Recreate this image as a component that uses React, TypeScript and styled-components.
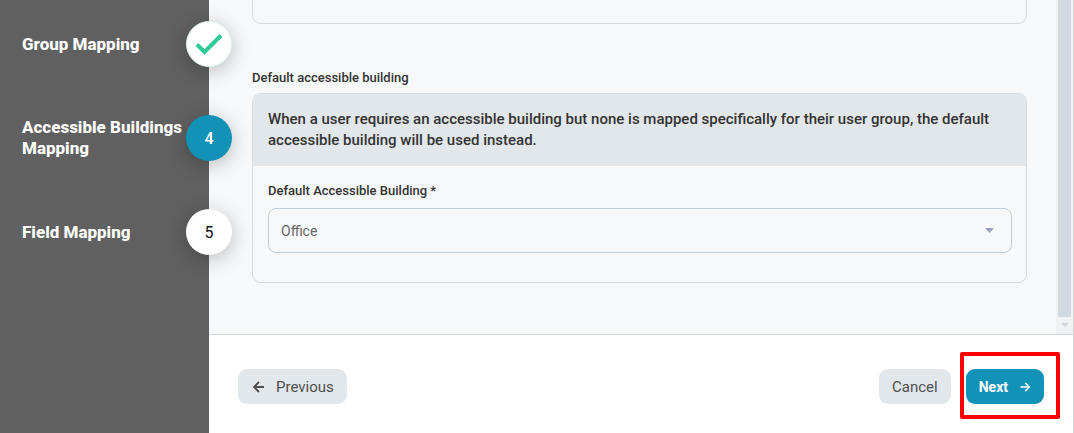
import React from "react";
import styled, { createGlobalStyle, css } from "styled-components";

const GlobalStyle = createGlobalStyle`
  * { box-sizing: border-box; }
  body { margin: 0; background: #fff; color: #333; font-family: Roboto, "Liberation Sans", sans-serif; font-size: 14px; }
  button, select { font: inherit; }
`;

const Page = styled.div`
  display: flex;
  min-height: 100vh;
  border-right: 1px solid #d3d3d3;
`;

const Sidebar = styled.nav`
  position: relative;
  z-index: 1;
  flex: 0 0 209px;
  padding: 21px 0 0 22px;
  background: #606060;
`;

const Steps = styled.ol`
  display: flex;
  flex-direction: column;
  gap: 48px;
  margin: 0 -23px 0 0;
  padding: 0;
  list-style: none;
`;

const Step = styled.li`
  display: flex;
  align-items: center;
  justify-content: space-between;
  height: 46px;
`;

const StepLabel = styled.span`
  flex: 0 0 164px;
  color: #fff;
  font-size: 17px;
  font-weight: 800;
  line-height: 21px;
`;

type StepState = "done" | "current" | "todo";

const StepBadge = styled.span<{ $state: StepState }>`
  display: flex;
  flex: 0 0 46px;
  align-items: center;
  justify-content: center;
  height: 46px;
  border-radius: 50%;
  background: #fff;
  color: #111;
  font-size: 16px;
  box-shadow: 0 4px 20px rgba(0, 0, 0, 0.25);
  ${({ $state }) => $state === "done" && css`border: 1px solid #dcf6eb;`}
  ${({ $state }) => $state === "current" && css`background: #1192b6; color: #fff; font-weight: 500;`}
`;

const Main = styled.main`
  display: flex;
  flex: 1;
  flex-direction: column;
  min-width: 0;
`;

const ScrollArea = styled.div`
  display: flex;
  border-bottom: 1px solid #cfd8df;
  background: #f7f8fa;
`;

const Content = styled.div`
  flex: 1;
  min-width: 0;
  padding: 0 29px 51px 43px;
`;

const PreviousPanel = styled.div`
  height: 24px;
  border: 1px solid #d5dce1;
  border-top: 0;
  border-radius: 0 0 9px 9px;
`;

const Section = styled.section`
  padding-top: 46px;
`;

const SectionTitle = styled.h2`
  margin: 0 0 7px;
  font-size: 13px;
  font-weight: 500;
  line-height: 16px;
`;

const Panel = styled.div`
  overflow: hidden;
  border: 1px solid #d5dce1;
  border-radius: 9px;
`;

const Notice = styled.p`
  margin: 0;
  padding: 15px;
  background: #e2e7eb;
  font-size: 15px;
  font-weight: 500;
  line-height: 21px;
`;

const Field = styled.div`
  padding: 17px 14px 29px 15px;
`;

const FieldLabel = styled.label`
  display: block;
  margin-bottom: 9px;
  font-size: 13px;
  font-weight: 500;
  line-height: 16px;
`;

const SelectBox = styled.div`
  display: grid;
  align-items: center;

  > * { grid-area: 1 / 1; }
  > svg { justify-self: end; margin-right: 18px; pointer-events: none; }
`;

const Select = styled.select`
  width: 100%;
  height: 45px;
  padding: 0 32px 0 12px;
  border: 1px solid #c0ced7;
  border-radius: 8px;
  background: transparent;
  color: #666;
  font-size: 14px;
  appearance: none;
`;

const Scrollbar = styled.div`
  display: flex;
  flex: 0 0 17px;
  flex-direction: column;
  align-items: center;
  padding-bottom: 7px;
  background: #eff2f5;
`;

const ScrollThumb = styled.div`
  flex: 1;
  width: 13px;
  margin-bottom: 6px;
  background: #d0d8e0;
`;

const Footer = styled.footer`
  display: flex;
  align-items: center;
  gap: 15px;
  padding: 34px 29px 29px;
`;

const Button = styled.button<{ $primary?: boolean }>`
  display: inline-flex;
  align-items: center;
  height: 35px;
  padding: 0 13px;
  border: 0;
  border-radius: 9px;
  background: ${({ $primary }) => ($primary ? "#1192b6" : "#e2e7eb")};
  color: ${({ $primary }) => ($primary ? "#fff" : "#4e4e4e")};
  font-size: ${({ $primary }) => ($primary ? "14px" : "15px")};
  font-weight: ${({ $primary }) => ($primary ? 700 : 400)};
  gap: 11px;
  white-space: nowrap;
`;

const Spacer = styled.span`
  flex: 1;
`;

const Highlighted = styled.div`
  position: relative;
  display: flex;

  &::after {
    content: "";
    position: absolute;
    inset: -17px -16px -15px -6px;
    border: 4px solid #fe0000;
    border-radius: 2px;
    pointer-events: none;
  }
`;

const CheckIcon = () => (
  <svg width="28" height="22" viewBox="0 0 28 22" fill="none" aria-hidden="true">
    <path d="M2 11.5L9.5 19L26 2.5" stroke="#2dcb95" strokeWidth="4" />
  </svg>
);

const TriangleIcon = ({ color, width, height }: { color: string; width: number; height: number }) => (
  <svg width={width} height={height} viewBox="0 0 10 5" preserveAspectRatio="none" aria-hidden="true">
    <path d="M0 0H10L5 5Z" fill={color} />
  </svg>
);

const ArrowLeft = () => (
  <svg width="14" height="12" viewBox="0 0 14 12" fill="none" aria-hidden="true">
    <path d="M13 6H3M8 1L3 6L8 11" stroke="#4e4e4e" strokeWidth="1.8" />
  </svg>
);

const ArrowRight = () => (
  <svg width="12" height="10" viewBox="0 0 12 10" fill="none" aria-hidden="true">
    <path d="M1.5 5H10M6.3 1L10.2 5L6.3 9" stroke="#fff" strokeWidth="1.6" />
  </svg>
);

const steps: { label: string; mark: React.ReactNode; state: StepState }[] = [
  { label: "Group Mapping", mark: <CheckIcon />, state: "done" },
  { label: "Accessible Buildings Mapping", mark: "4", state: "current" },
  { label: "Field Mapping", mark: "5", state: "todo" },
];

export default function App() {
  return (
    <>
      <GlobalStyle />
      <Page>
        <Sidebar>
          <Steps>
            {steps.map(({ label, mark, state }) => (
              <Step key={label} aria-current={state === "current" ? "step" : undefined}>
                <StepLabel>{label}</StepLabel>
                <StepBadge $state={state}>{mark}</StepBadge>
              </Step>
            ))}
          </Steps>
        </Sidebar>
        <Main>
          <ScrollArea>
            <Content>
              <PreviousPanel />
              <Section>
                <SectionTitle>Default accessible building</SectionTitle>
                <Panel>
                  <Notice>
                    When a user requires an accessible building but none is mapped specifically for their user group, the default
                    accessible building will be used instead.
                  </Notice>
                  <Field>
                    <FieldLabel htmlFor="building">Default Accessible Building *</FieldLabel>
                    <SelectBox>
                      <Select id="building" defaultValue="Office">
                        <option>Office</option>
                      </Select>
                      <TriangleIcon color="#9a9fbd" width={9} height={5} />
                    </SelectBox>
                  </Field>
                </Panel>
              </Section>
            </Content>
            <Scrollbar aria-hidden="true">
              <ScrollThumb />
              <TriangleIcon color="#cdd6de" width={8} height={4} />
            </Scrollbar>
          </ScrollArea>
          <Footer>
            <Button type="button">
              <ArrowLeft />
              Previous
            </Button>
            <Spacer />
            <Button type="button">Cancel</Button>
            <Highlighted>
              <Button type="button" $primary>
                Next
                <ArrowRight />
              </Button>
            </Highlighted>
          </Footer>
        </Main>
      </Page>
    </>
  );
}
